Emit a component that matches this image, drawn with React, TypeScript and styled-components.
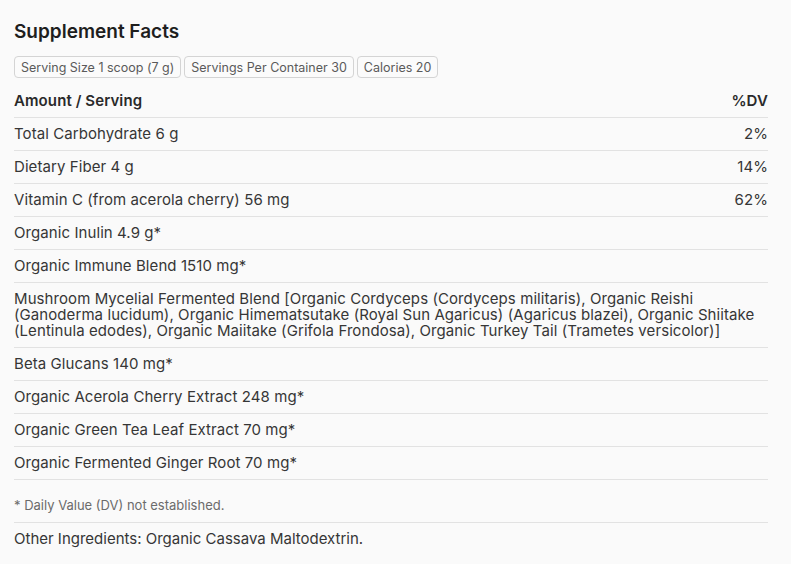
import React from "react";
import styled, { createGlobalStyle } from "styled-components";

const Global = createGlobalStyle`
  html, body { margin: 0; padding: 0; background: #fafafa; }
  body { font-family: Inter, "Noto Sans", sans-serif; color: #333; }
`;

const Page = styled.div`
  padding: 18px 23px 0 14px;
  width: 754px;
`;

const Title = styled.h2`
  margin: 0;
  font-size: 19px;
  font-weight: 600;
  color: #1e1e1e;
  line-height: 28px;
`;

const Chips = styled.div`
  display: flex;
  gap: 3px;
  margin-top: 10px;
`;

const Chip = styled.span`
  display: inline-flex;
  align-items: center;
  height: 20px;
  padding: 0 6px;
  border: 1px solid #d4d4d4;
  border-radius: 4px;
  font-size: 12.5px;
  color: #5a5a5a;
  background: #fbfbfb;
`;

const Table = styled.div`
  margin-top: 7px;
`;

const Row = styled.div<{ $head?: boolean }>`
  display: flex;
  justify-content: space-between;
  align-items: flex-start;
  padding: 8px 0;
  border-bottom: 1px solid #e2e2e2;
  line-height: 16px;
  font-size: 15px;
  letter-spacing: ${(p) => (p.$head ? "0.1px" : "0.08px")};
  font-weight: ${(p) => (p.$head ? 600 : 400)};
  color: ${(p) => (p.$head ? "#2a2a2a" : "#363636")};
`;

const Name = styled.span`
  flex: 1;
`;

const Dv = styled.span`
  text-align: right;
  white-space: nowrap;
  padding-left: 16px;
`;

const Footnote = styled.div`
  padding: 17px 0 9px;
  font-size: 13px;
  line-height: 16px;
  color: #6b6b6b;
  border-bottom: 1px solid #e2e2e2;
`;

const Other = styled.div`
  padding: 8px 0;
  font-size: 15px;
  line-height: 16px;
  color: #363636;
`;

const rows: [string, string?][] = [
  ["Total Carbohydrate 6 g", "2%"],
  ["Dietary Fiber 4 g", "14%"],
  ["Vitamin C (from acerola cherry) 56 mg", "62%"],
  ["Organic Inulin 4.9 g*"],
  ["Organic Immune Blend 1510 mg*"],
  [
    "Mushroom Mycelial Fermented Blend [Organic Cordyceps (Cordyceps militaris), Organic Reishi (Ganoderma lucidum), Organic Himematsutake (Royal Sun Agaricus) (Agaricus blazei), Organic Shiitake (Lentinula edodes), Organic Maiitake (Grifola Frondosa), Organic Turkey Tail (Trametes versicolor)]",
  ],
  ["Beta Glucans 140 mg*"],
  ["Organic Acerola Cherry Extract 248 mg*"],
  ["Organic Green Tea Leaf Extract 70 mg*"],
  ["Organic Fermented Ginger Root 70 mg*"],
];

export default function App() {
  return (
    <Page>
      <Global />
      <Title>Supplement Facts</Title>
      <Chips>
        <Chip>Serving Size 1 scoop (7 g)</Chip>
        <Chip>Servings Per Container 30</Chip>
        <Chip>Calories 20</Chip>
      </Chips>
      <Table>
        <Row $head>
          <Name>Amount / Serving</Name>
          <Dv>%DV</Dv>
        </Row>
        {rows.map(([n, d]) => (
          <Row key={n}>
            <Name>{n}</Name>
            {d && <Dv>{d}</Dv>}
          </Row>
        ))}
      </Table>
      <Footnote>* Daily Value (DV) not established.</Footnote>
      <Other>Other Ingredients: Organic Cassava Maltodextrin.</Other>
    </Page>
  );
}
